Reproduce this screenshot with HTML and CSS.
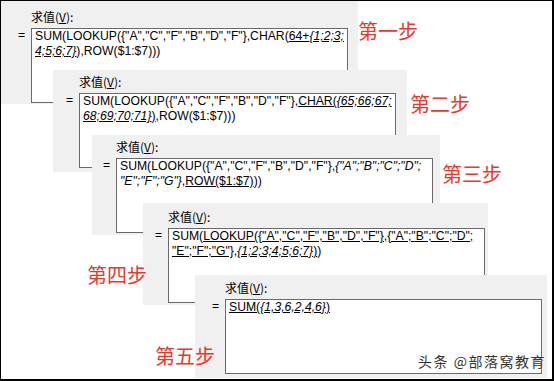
FILE: index.html
```html
<!DOCTYPE html>
<html lang="zh-CN">
<head>
  <meta charset="UTF-8" />
  <meta name="viewport" content="width=device-width, initial-scale=1.0"/>
  <title>求值 - 五步</title>
  <link rel="stylesheet" href="styles.css">
</head>
<body>
  <div class="shot">
    <!-- 第一步 -->
    <div class="step s1">
      <div class="cap">求值(<u>V</u>):</div>
      <div class="row">
        <span class="eq">=</span>
        <div class="box">SUM(LOOKUP({"A","C","F","B","D","F"},CHAR(<u>64+<i>{1;2;3;</i></u><br><u><i>4;5;6;7}</i></u>),ROW($1:$7)))</div>
      </div>
    </div>

    <!-- 第二步 -->
    <div class="step s2">
      <div class="cap">求值(<u>V</u>):</div>
      <div class="row">
        <span class="eq">=</span>
        <div class="box">SUM(LOOKUP({"A","C","F","B","D","F"},<u>CHAR(<i>{65;66;67;</i></u><br><u><i>68;69;70;71}</i>)</u>,ROW($1:$7)))</div>
      </div>
    </div>

    <!-- 第三步 -->
    <div class="step s3">
      <div class="cap">求值(<u>V</u>):</div>
      <div class="row">
        <span class="eq">=</span>
        <div class="box">SUM(LOOKUP({"A","C","F","B","D","F"},<i>{"A";"B";"C";"D";</i><br><i>"E";"F";"G"}</i>,<u>ROW($1:$7)</u>))</div>
      </div>
    </div>

    <!-- 第四步 -->
    <div class="step s4">
      <div class="cap">求值(<u>V</u>):</div>
      <div class="row">
        <span class="eq">=</span>
        <div class="box">SUM(<u>LOOKUP({"A","C","F","B","D","F"},{"A";"B";"C";"D";</u><br><u>"E";"F";"G"},<i>{1;2;3;4;5;6;7}</i>)</u>)</div>
      </div>
    </div>

    <!-- 第五步 -->
    <div class="step s5">
      <div class="cap">求值(<u>V</u>):</div>
      <div class="row">
        <span class="eq">=</span>
        <div class="box"><u>SUM(<i>{1,3,6,2,4,6}</i>)</u></div>
      </div>
    </div>

    <span class="tag t1">第一步</span>
    <span class="tag t2">第二步</span>
    <span class="tag t3">第三步</span>
    <span class="tag t4">第四步</span>
    <span class="tag t5">第五步</span>

    <div class="mark">头条 @部落窝教育</div>
  </div>
</body>
</html>
```

FILE: styles.css
```css
body {
  margin: 0;
  background: #fff;
}

.shot {
  position: relative;
  width: 554px;
  height: 381px;
  box-sizing: border-box;
  border: 1px solid #000;
  border-right-width: 2px;
  border-bottom-width: 2px;
  overflow: hidden;
  background: #fff;
  font-family: "Liberation Sans", Arial, sans-serif;
  color: #000;
}

/* Kotak dialog "求值" */
.step {
  position: absolute;
  box-sizing: border-box;
  background: #f0f0f0;
}

.s1 { left: 0;     top: 0;     width: 357px; height: 103px; padding: 8px 0 0 10px; }
.s2 { left: 52px;  top: 69px;  width: 354px; height: 102px; padding: 4px 0 0 6px; }
.s3 { left: 91px;  top: 134px; width: 348px; height: 100px; padding: 4px 0 0 4px; }
.s4 { left: 142px; top: 202px; width: 345px; height: 102px; padding: 6px 0 0 5px; }
.s5 { left: 194px; top: 274px; width: 352px; height: 103px; padding: 5px 0 0 10px; }

.cap {
  font-family: "Noto Sans CJK SC", sans-serif;
  font-size: 12px;
  line-height: 16px;
  margin: 0 0 3px 20px;
}

.row {
  display: flex;
}

.eq {
  width: 20px;
  padding-left: 7px;
  box-sizing: border-box;
  font-size: 12.2px;
  line-height: 15px;
}

.box {
  width: 317px;
  height: 75px;
  box-sizing: border-box;
  border: 1px solid #6a6a6a;
  background: #fff;
  padding: 0 3px;
  font-size: 12.2px;
  line-height: 15px;
  white-space: nowrap;
}

.box i {
  font-style: italic;
}

/* Label merah */
.tag {
  position: absolute;
  font-family: "Noto Sans CJK SC", sans-serif;
  font-size: 20px;
  line-height: 20px;
  color: #e4392e;
}

.t1 { left: 357px; top: 20px; }
.t2 { left: 409px; top: 93px; }
.t3 { left: 441px; top: 163px; }
.t4 { left: 86px;  top: 264px; }
.t5 { left: 154px; top: 345px; }

.mark {
  position: absolute;
  left: 417px;
  top: 352px;
  font-family: "Noto Sans CJK SC", sans-serif;
  font-size: 14px;
  line-height: 16px;
  letter-spacing: 1.5px;
  color: #333;
  white-space: nowrap;
  text-shadow: 0 0 2px #fff;
}
```
